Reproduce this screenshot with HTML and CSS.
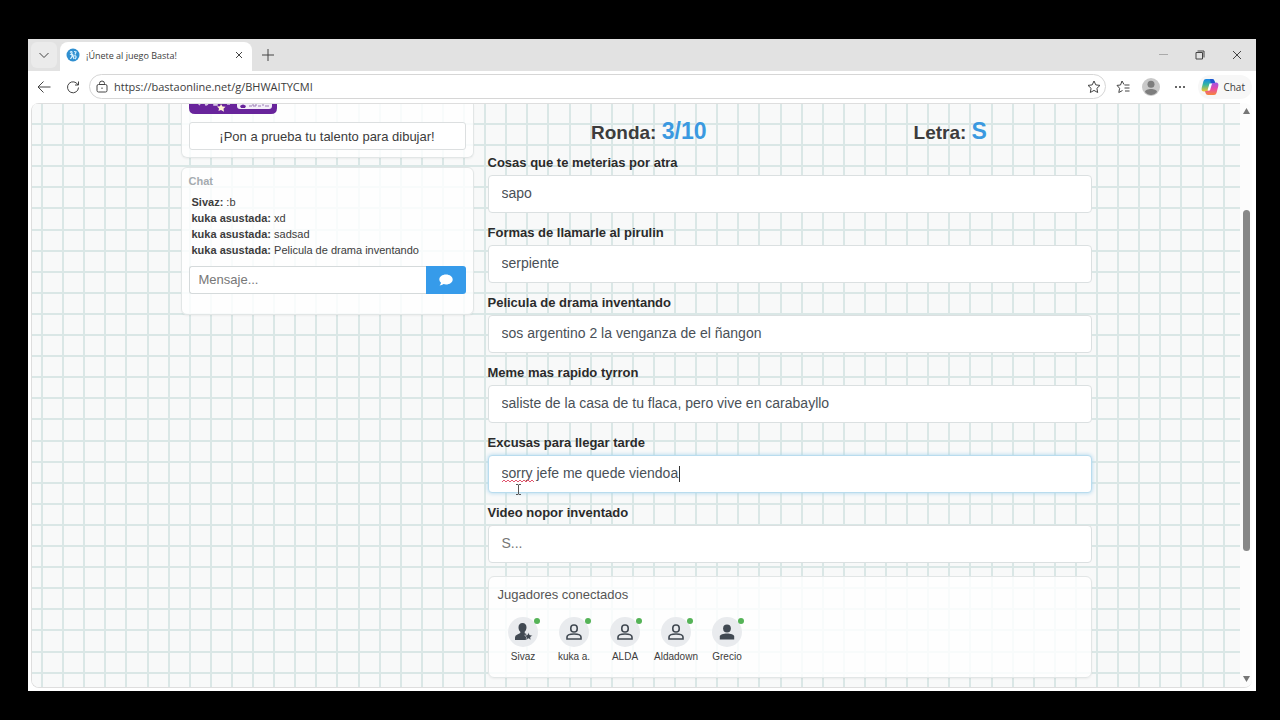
FILE: index.html
```html
<!DOCTYPE html>
<html lang="es">
<head>
<meta charset="utf-8">
<meta name="viewport" content="width=device-width, initial-scale=1">
<title>¡Únete al juego Basta!</title>
<link rel="stylesheet" href="styles.css">
</head>
<body>
<div class="window">
  <header class="tabbar">
    <button class="tab-menu" aria-label="Menú de pestañas"><svg width="12" height="12" viewBox="0 0 12 12"><path d="M1.5 4 6 8.500 10.500 4"/></svg></button>
    <div class="tab">
      <svg class="favicon" width="14" height="14" viewBox="0 0 14 14"><circle cx="7" cy="7" r="6.500" fill="#2f8fd0"/><path d="M4 4.500c2-2 3 0 1 2 2 0 1 4-1 4M8 3.500l2 .5-1 2.500M8 8c2-1 3 1 1 3M6.500 6l1.500 5" fill="none" stroke="#d9f1ff" stroke-width="1.200"/></svg>
      <span class="tab-title">¡Únete al juego Basta!</span>
      <button class="icon-btn" aria-label="Cerrar pestaña"><svg width="10" height="10" viewBox="0 0 10 10"><path d="m2 2 6 6M8 2 2 8"/></svg></button>
    </div>
    <button class="icon-btn new-tab" aria-label="Nueva pestaña"><svg width="14" height="14" viewBox="0 0 14 14"><path d="M7 1v12M1 7h12"/></svg></button>
    <div class="window-controls">
      <button class="icon-btn dim" aria-label="Minimizar"><svg width="12" height="12" viewBox="0 0 12 12"><path d="M2 5.500h9"/></svg></button>
      <button class="icon-btn" aria-label="Restaurar"><svg width="12" height="12" viewBox="0 0 12 12"><path d="M2 3.500h6.500V10H2zM3.500 2h6.500v6.500"/></svg></button>
      <button class="icon-btn" aria-label="Cerrar"><svg width="12" height="12" viewBox="0 0 12 12"><path d="m2 2 8 8M10 2 2 10"/></svg></button>
    </div>
  </header>
  <nav class="toolbar">
    <button class="icon-btn" aria-label="Atrás"><svg width="14" height="14" viewBox="0 0 14 14"><path d="M13.500 7H1M6.500 1.500 1 7l5.500 5.500"/></svg></button>
    <button class="icon-btn" aria-label="Recargar"><svg width="14" height="14" viewBox="0 0 14 14"><path d="M12 5A5.500 5.500 0 1 0 12.500 7.500M12.500 1.500V5H9"/></svg></button>
    <div class="address">
      <svg width="12" height="14" viewBox="0 0 12 14"><rect x="1" y="4.500" width="10" height="7.500" rx="1.500"/><path d="M3.500 4.500V3.500a2.500 2.500 0 0 1 5 0V4.500M6 7.500v1.500"/></svg>
      <input type="text" aria-label="Dirección" value="https://bastaonline.net/g/BHWAITYCMI">
      <button class="icon-btn" aria-label="Favorito"><svg width="14" height="14" viewBox="0 0 14 14"><path d="m7 1 1.800 3.900 4.200.5-3.100 2.900.8 4.200L7 10.400l-3.700 2.100.8-4.200L1 5.400l4.200-.5z"/></svg></button>
    </div>
    <div class="tools">
      <button class="icon-btn" aria-label="Favoritos"><svg width="14" height="14" viewBox="0 0 14 14"><path d="M8 4.500 6 1 4.500 5 1 5.400l2.600 2.900-.8 4.200L6.500 10.500M8.500 5H13.500M8.500 8H13.500M9 11h4.500"/></svg></button>
      <button class="icon-btn" aria-label="Perfil"><svg class="solid" width="18" height="18" viewBox="0 0 18 18"><circle cx="9" cy="9" r="9" fill="#c9c9c9"/><circle cx="9" cy="6.300" r="3.500" fill="#7d7d7d"/><path d="M3 14c0-4 12-4 12 0-3 4-9 4-12 0z" fill="#7d7d7d"/></svg></button>
      <button class="icon-btn" aria-label="Más opciones"><svg class="solid" width="16" height="4" viewBox="0 0 16 4"><circle cx="4" cy="2" r="1"/><circle cx="8" cy="2" r="1"/><circle cx="12" cy="2" r="1"/></svg></button>
      <button class="copilot"><svg class="solid" width="18" height="18" viewBox="0 0 18 18"><defs><linearGradient id="ca" x1="0" y1="0" x2="0" y2="1"><stop offset="0" stop-color="#1685e8"/><stop offset=".45" stop-color="#35b6a0"/><stop offset="1" stop-color="#f5c52b"/></linearGradient><linearGradient id="cb" x1="0" y1="0" x2="0" y2="1"><stop offset="0" stop-color="#9b55e8"/><stop offset=".5" stop-color="#e84aa8"/><stop offset="1" stop-color="#f7873a"/></linearGradient></defs><path d="M5 1h6q2 0 2.500 2L14 5h-2q-2 0-2.700 2L8 11q-.7 2.500-3 2.500H3Q0 13.500.7 10L2.500 3Q3 1 5 1z" fill="url(#ca)"/><path d="M13 17H7q-2 0-2.500-2L4 13h2q2 0 2.700-2L10 7q.7-2.500 3-2.500h2q3 0 2.300 3.500L15.500 15q-.5 2-2.500 2z" fill="url(#cb)"/><path d="M9 1h2q2 0 2.500 2l.5 2h-2q-1.500 0-2 1z" fill="#2052cf"/><path d="m8.500 5.500 2.500 0-2 7H6.500z" fill="#fff"/></svg>Chat</button>
    </div>
  </nav>
  <div class="viewport">
    <main class="page">
      <div class="container">
        <aside class="side">
          <section class="card promo">
            <svg class="banner" width="88" height="10" viewBox="0 1 88 10"><path d="M0 0h88v5q0 6-6 6H6q-6 0-6-6z" fill="#68249b"/><path d="M9 0l2 2M16 0l1 2 2-1M25 1h3v1h-3zM38 1h3" stroke="#d9c4e8" stroke-width="1.500"/><path d="m32 1 1.500 2.500 3 .3-2 2 .5 3L32 7l-2.500 1 .5-2.500-2-2 3-.2z" fill="#fff2d5"/><path d="M48 0h35v3q0 3-3 3H51q-3 0-3-3z" fill="#f4effa"/><path d="M51 3q3-3 6 0l-1 2h-4z" fill="#68249b"/><path d="M60 3h3M64 1v2h3V1M69 3h3M74 1v2M76 3h4" stroke="#9a7db3" fill="none"/></svg>
            <button class="promo-btn">¡Pon a prueba tu talento para dibujar!</button>
          </section>
          <section class="card chat">
            <h2>Chat</h2>
            <ul class="messages">
              <li><b>Sivaz:</b> :b</li>
              <li><b>kuka asustada:</b> xd</li>
              <li><b>kuka asustada:</b> sadsad</li>
              <li><b>kuka asustada:</b> Pelicula de drama inventando</li>
            </ul>
            <form class="send">
              <input type="text" placeholder="Mensaje..." aria-label="Mensaje">
              <button type="button" aria-label="Enviar"><svg width="14" height="12" viewBox="0 0 14 12"><path d="M7 .5c3.800 0 6.700 2.200 6.700 5s-2.900 5-6.700 5q-1.300 0-2.400-.4Q3 11.500.6 11.500q1.300-1.500 1.400-2.800Q.3 7.300.3 5.500c0-2.800 2.900-5 6.700-5z" fill="#fff"/></svg></button>
            </form>
          </section>
        </aside>
        <section class="game">
          <div class="status">
            <p>Ronda: <strong>3/10</strong></p>
            <p>Letra: <strong>S</strong></p>
          </div>
          <form class="answers">
            <div class="field"><label for="a1">Cosas que te meterias por atra</label><input id="a1" type="text" value="sapo"></div>
            <div class="field"><label for="a2">Formas de llamarle al pirulin</label><input id="a2" type="text" value="serpiente"></div>
            <div class="field"><label for="a3">Pelicula de drama inventando</label><input id="a3" type="text" value="sos argentino 2 la venganza de el ñangon"></div>
            <div class="field"><label for="a4">Meme mas rapido tyrron</label><input id="a4" type="text" value="saliste de la casa de tu flaca, pero vive en carabayllo"></div>
            <div class="field active"><label for="a5">Excusas para llegar tarde</label><input id="a5" type="text" value="sorry jefe me quede viendoa">
              <svg class="squiggle" width="32" height="4" viewBox="0 0 32 4"><path d="M0 3l2-2 2 2 2-2 2 2 2-2 2 2 2-2 2 2 2-2 2 2 2-2 2 2 2-2 2 2 2-2 2 2"/></svg>
              <span class="caret"></span>
              <svg class="pointer" width="7" height="11" viewBox="0 0 7 11"><path d="M1 .5h2l.5.5.5-.5h2M3.500 1v9M1 10.500h2l.5-.5.5.5h2"/></svg>
            </div>
            <div class="field"><label for="a6">Video nopor inventado</label><input id="a6" type="text" placeholder="S..."></div>
          </form>
          <section class="card players">
            <h2>Jugadores conectados</h2>
            <ul>
              <li><span class="avatar"><svg width="20" height="18" viewBox="0 0 20 18"><path d="M9.500 0c2.500 0 4 1.800 4 4.200 0 2-.8 3.600-1.800 4.500v1.500l2 .8-1.200 2 1.500 1.300V17H2v-2.500q0-2 2-2.800L7.300 10V8.700C6.300 7.800 5.500 6.200 5.500 4.200 5.500 1.800 7 0 9.500 0z"/><path d="m15.500 9.500 1.200 2.400 2.700.4-2 1.900.5 2.700-2.400-1.300-2.400 1.300.5-2.700-2-1.900 2.700-.4z" stroke="#e9ebee" stroke-width=".5"/></svg></span>Sivaz</li>
              <li><span class="avatar"><svg class="outline" width="16" height="18" viewBox="0 0 16 18"><rect x="4.800" y="2" width="6.400" height="7" rx="3"/><path d="M1 16v-2c0-4 14-4 14 0v2z"/></svg></span>kuka a.</li>
              <li><span class="avatar"><svg class="outline" width="16" height="18" viewBox="0 0 16 18"><rect x="4.800" y="2" width="6.400" height="7" rx="3"/><path d="M1 16v-2c0-4 14-4 14 0v2z"/></svg></span>ALDA</li>
              <li><span class="avatar"><svg class="outline" width="16" height="18" viewBox="0 0 16 18"><rect x="4.800" y="2" width="6.400" height="7" rx="3"/><path d="M1 16v-2c0-4 14-4 14 0v2z"/></svg></span>Aldadown</li>
              <li><span class="avatar"><svg width="16" height="18" viewBox="0 0 16 18"><circle cx="8" cy="5.500" r="3.900"/><path d="M.8 16.500v-3c0-4 14.400-4 14.400 0v3z"/></svg></span>Grecio</li>
            </ul>
          </section>
        </section>
      </div>
    </main>
    <div class="scrollbar">
      <svg width="7" height="6" viewBox="0 0 7 6"><path d="M3.500 0 7 6H0z"/></svg>
      <div class="track"><div class="thumb"></div></div>
      <svg width="7" height="6" viewBox="0 0 7 6"><path d="M0 0h7L3.500 6z"/></svg>
    </div>
  </div>
</div>
</body>
</html>
```

FILE: styles.css
```css
* { box-sizing: border-box; }

body {
  margin: 0;
  height: 100vh;
  padding: 39px 24px 29px 28px;
  display: flex;
  background: #000;
  color: #3c3c3c;
  font-family: "Liberation Sans", Arial, sans-serif;
}

h2, p, ul { margin: 0; padding: 0; }
ul { list-style: none; }
button, input { font: inherit; color: inherit; }
button { padding: 0; border: 0; background: none; }
input { min-width: 0; outline: 0; }

.window {
  flex: 1;
  min-width: 0;
  display: flex;
  flex-direction: column;
  background: #fff;
  font-size: 12px;
}

/* Browser frame */
.tabbar, .toolbar { font-family: "Open Sans", "Noto Sans", sans-serif; }
.tabbar svg, .toolbar svg { fill: none; stroke: #444; stroke-width: 1; }
.tabbar .favicon, .toolbar .solid { stroke: none; fill: #333; }
.tabbar .favicon path { stroke: #d9f1ff; }

.icon-btn {
  flex: none;
  display: grid;
  place-items: center;
}

.tabbar {
  display: flex;
  align-items: center;
  height: 32px;
  padding-left: 3px;
  background: #e2e2e2;
}

.tab-menu {
  display: grid;
  place-items: center;
  width: 26px;
  height: 26px;
  border-radius: 6px;
  background: #ebebeb;
}

.tab {
  display: flex;
  align-items: center;
  align-self: stretch;
  width: 192px;
  margin: 3px 0 0 3px;
  padding: 0 8px 3px 6px;
  border-radius: 8px 8px 0 0;
  background: #fff;
  font-size: 9px;
}
.tab-title { flex: 1; padding-left: 6px; white-space: nowrap; }
.new-tab { margin-left: 9px; }

.window-controls {
  display: flex;
  gap: 25px;
  margin-left: auto;
  padding-right: 13px;
}
.dim { opacity: .35; }

.toolbar {
  display: flex;
  align-items: center;
  height: 32px;
  padding: 0 4px 1px 9px;
  gap: 15px;
}

.address {
  flex: 1;
  display: flex;
  align-items: center;
  height: 25px;
  margin-left: -6px;
  padding: 0 4px 0 6px;
  gap: 6px;
  border: 1px solid #d6d6d6;
  border-radius: 13px;
}
.address input { flex: 1; padding: 0; border: 0; font-size: 11px; }

.tools { display: flex; align-items: center; gap: 12px; margin-left: -5px; }
.copilot {
  display: flex;
  align-items: center;
  gap: 4px;
  height: 24px;
  margin-left: -2px;
  padding: 0 7px 0 3px;
  border-radius: 12px;
  background: #f7f7f7;
  font-size: 10px;
}

/* Page area */
.viewport {
  flex: 1;
  min-height: 0;
  display: flex;
  margin: 0 4px 3px 3px;
  border: 1px solid #dedede;
  border-width: 0 0 1px 1px;
  border-radius: 8px;
  overflow: hidden;
}

.page {
  --line: #dae7e6;
  --ruled: var(--line) 0 2px, #0000 2px 21px, var(--line) 21px 23px, #0000 23px 42px,
    var(--line) 42px 44px, #0000 44px 63px, var(--line) 63px 65px, #0000 65px 84px,
    var(--line) 84px 86px, #0000 86px 106px, var(--line) 106px 108px, #0000 108px 127px,
    var(--line) 127px 129px, #0000 129px 148px, var(--line) 148px 150px, #0000 150px 169px,
    var(--line) 169px 171px, #0000 171px 190px, var(--line) 190px 192px, #0000 192px 211px;
  flex: 1;
  min-width: 0;
  overflow: hidden;
  border-top: 1px solid #dedede;
  background:
    linear-gradient(90deg, var(--ruled)) 9px 0 / 211px 211px,
    linear-gradient(var(--ruled)) 0 19px / 211px 211px,
    #f8f9f9;
}

.container {
  display: grid;
  grid-template-columns: 293fr 604fr;
  gap: 14px;
  align-items: start;
  max-width: 911px;
  margin: 0 auto;
}

.card {
  border: 1px solid #e2e6e6;
  border-radius: 6px;
  background: #ffffffd0;
  box-shadow: 0 1px 2px #0000000d;
}

.side { display: grid; gap: 9px; }

.promo {
  padding: 0 7px 7px;
  border-top: 0;
  border-radius: 0 0 6px 6px;
}
.banner { display: block; margin-bottom: 8px; }
.promo-btn {
  width: 100%;
  height: 28px;
  border: 1px solid #dcdfe0;
  border-radius: 3px;
  background: #fff;
  font-size: 13px;
}

.chat { padding: 6px 7px 20px; }
.chat h2 { color: #a5abb0; font-size: 11px; line-height: 14px; }
.messages { padding: 6px 3px 8px; line-height: 16px; font-size: 11px; }

.send { display: flex; }
.send input {
  flex: 1;
  height: 28px;
  padding: 0 9px 2px;
  border: 1px solid #d5dadb;
  border-right: 0;
  border-radius: 3px 0 0 3px;
  background: #fff;
  font-size: 13px;
}
.send button {
  display: grid;
  place-items: center;
  width: 40px;
  border-radius: 0 3px 3px 0;
  background: #369bea;
}
input::placeholder { color: #777; opacity: 1; }

.status {
  display: grid;
  grid-template-columns: 1fr 1fr;
  gap: 19px;
  padding: 12px 0 7px 20px;
  font-size: 19px;
  font-weight: bold;
  line-height: 30px;
  text-align: center;
}
.status p { white-space: nowrap; }
.status strong { color: #3b99e0; font-size: 23px; }

.answers { display: grid; gap: 12px; }
.field { position: relative; display: grid; gap: 4px; }
.field label { color: #2b2b2b; font-size: 13px; font-weight: bold; line-height: 16px; }
.field input {
  width: 100%;
  height: 38px;
  padding: 0 13px 3px;
  border: 1px solid #dbe0e1;
  border-radius: 4px;
  background: #fff;
  color: #495057;
  font-size: 14px;
}
.field.active input { border-color: #b9dcee; box-shadow: 0 0 4px #a9d5ee; }

.squiggle { position: absolute; left: 14px; top: 44px; fill: none; stroke: #e2556f; }
.caret { position: absolute; left: 191px; top: 31px; width: 1px; height: 16px; background: #333; }
.pointer { position: absolute; left: 27px; top: 49px; fill: none; stroke: #555; }

.players { margin-top: 13px; padding: 9px 9px 13px; }
.players h2 { color: #555; font-size: 13px; font-weight: normal; line-height: 18px; }
.players ul { display: flex; padding-top: 13px; }
.players li {
  display: grid;
  justify-items: center;
  gap: 3px;
  width: 51px;
  font-size: 10px;
  line-height: 14px;
}
.avatar {
  position: relative;
  display: grid;
  place-items: center;
  width: 30px;
  height: 30px;
  border-radius: 50%;
  background: #e9ebee;
}
.avatar svg { fill: #414952; }
.avatar .outline { fill: none; stroke: #414952; stroke-width: 1.6; }
.avatar::after {
  content: "";
  position: absolute;
  top: 1px;
  right: -2px;
  width: 6px;
  height: 6px;
  border-radius: 50%;
  background: #55b357;
}

.scrollbar {
  display: flex;
  flex-direction: column;
  align-items: center;
  width: 12px;
  padding: 5px 0;
  background: #fcfcfc;
}
.scrollbar svg { fill: #777; }
.track {
  flex: 1;
  display: grid;
  grid-template-rows: 96fr 341fr 125fr;
}
.thumb { grid-row: 2; width: 7px; border-radius: 4px; background: #888; }
```
